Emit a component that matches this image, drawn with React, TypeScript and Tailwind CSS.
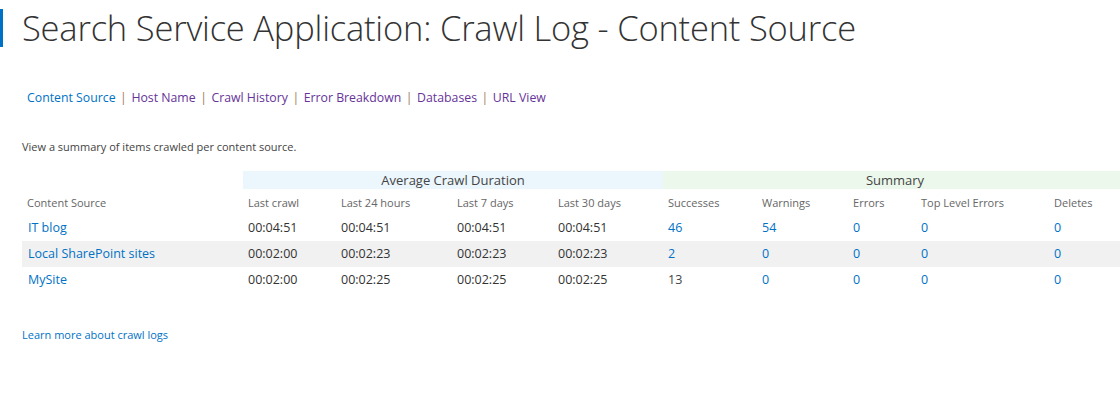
const avg = ['Last crawl', 'Last 24 hours', 'Last 7 days', 'Last 30 days'];
const summary = ['Successes', 'Warnings', 'Errors', 'Top Level Errors', 'Deletes'];

const rows = [
  { name: 'IT blog', times: ['00:04:51', '00:04:51', '00:04:51', '00:04:51'], counts: ['46', '54', '0', '0', '0'] },
  { name: 'Local SharePoint sites', times: ['00:02:00', '00:02:23', '00:02:23', '00:02:23'], counts: ['2', '0', '0', '0', '0'] },
  { name: 'MySite', times: ['00:02:00', '00:02:25', '00:02:25', '00:02:25'], counts: ['13', '0', '0', '0', '0'] },
];

// widths of every column, first is the content source name
const widths = ['w-[221px]', 'w-[93px]', 'w-[116px]', 'w-[101px]', 'w-[110px]', 'w-[94px]', 'w-[91px]', 'w-[68px]', 'w-[133px]', 'w-[120px]'];
const links = [
  { label: 'Content Source', visited: false },
  { label: 'Host Name', visited: true },
  { label: 'Crawl History', visited: true },
  { label: 'Error Breakdown', visited: true },
  { label: 'Databases', visited: true },
  { label: 'URL View', visited: true },
];

export default function App() {
  return (
    <div className="w-[1120px] h-[399px] overflow-hidden bg-white text-[#444] font-['Open_Sans',sans-serif]">
      {/* Title */}
      <div className="flex items-center h-[54px] pt-[2px]">
        <div className="w-[3px] h-[38px] bg-[#0072c6]" />
        <h1 className="ml-[19px] text-[34.5px] font-light text-[#333] leading-none tracking-[-0.2px]">
          Search Service Application: Crawl Log - Content Source
        </h1>
      </div>

      {/* Nav */}
      <div className="mt-[34px] ml-[27px] flex items-center text-[12.3px] leading-5">
        {links.map((l, i) => (
          <span key={l.label} className="flex items-center">
            {i > 0 && <span className="mx-[4.5px] text-[#a07a5a]">|</span>}
            <a className={l.visited ? 'text-[#663399]' : 'text-[#0072c6]'}>{l.label}</a>
          </span>
        ))}
      </div>

      <p className="mt-[31px] ml-[22px] text-[11px] leading-4 text-[#444]">
        View a summary of items crawled per content source.
      </p>

      {/* Table */}
      <table className="mt-[16px] ml-[22px] border-collapse table-fixed w-[1147px]">
        <colgroup>
          {widths.map((w, i) => (
            <col key={i} className={w} />
          ))}
        </colgroup>
        <thead>
          <tr className="h-[18px] text-[13px] text-[#444]">
            <th className="p-0" />
            <th colSpan={4} className="bg-[#ebf6fd] font-normal p-0 leading-[18px]">Average Crawl Duration</th>
            <th colSpan={5} className="bg-[#edf8ec] font-normal p-0 leading-[18px] pr-[42px]">Summary</th>
          </tr>
          <tr className="h-[26px] text-[11px] text-[#666]">
            <th className="text-left font-normal pl-[5px] pt-[2px]">Content Source</th>
            {[...avg, ...summary].map((h) => (
              <th key={h} className="text-left font-normal pl-[5px] pt-[2px]">{h}</th>
            ))}
          </tr>
        </thead>
        <tbody>
          {rows.map((r, ri) => (
            <tr key={r.name} className={`h-[26px] text-[12.5px] ${ri === 1 ? 'bg-[#f1f1f1]' : ''}`}>
              <td className="pl-[6px] text-[#0072c6] whitespace-nowrap">{r.name}</td>
              {r.times.map((t, i) => (
                <td key={i} className="pl-[5px] text-[#333]">{t}</td>
              ))}
              {r.counts.map((c, i) => (
                <td key={i} className={`pl-[5px] ${ri === 2 && i === 0 ? 'text-[#444]' : 'text-[#0072c6]'}`}>{c}</td>
              ))}
            </tr>
          ))}
        </tbody>
      </table>

      <a className="block mt-[34px] ml-[22px] text-[11px] leading-4 text-[#0072c6]">Learn more about crawl logs</a>
    </div>
  );
}
